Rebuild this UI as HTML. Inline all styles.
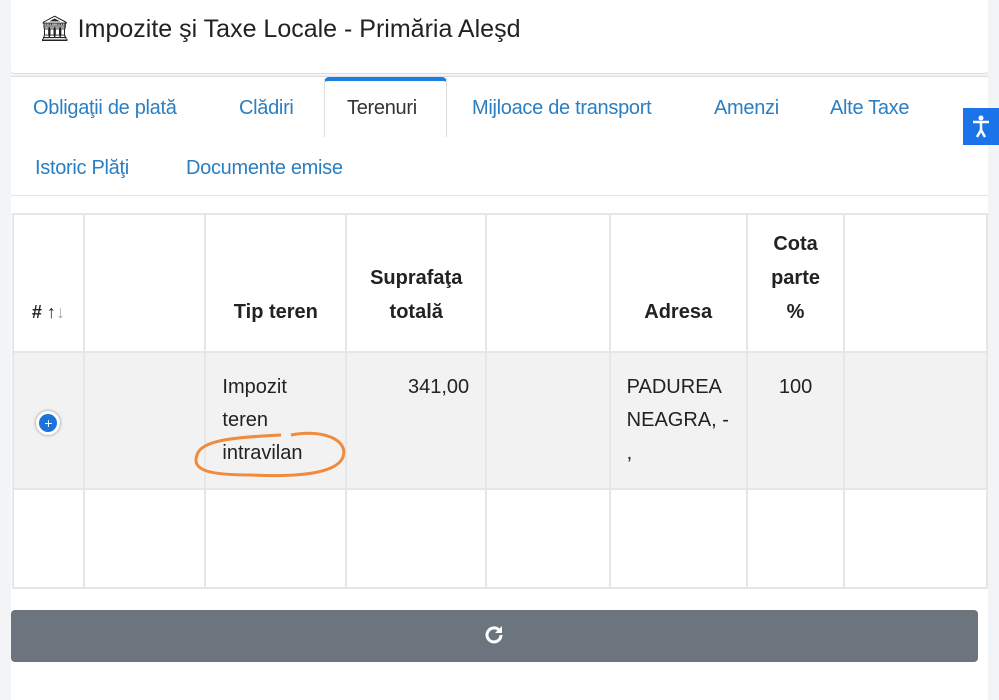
<!DOCTYPE html>
<html><head><meta charset="utf-8"><style>
*{box-sizing:border-box;margin:0;padding:0}
body{width:999px;height:700px;background:#f3f4f6;font-family:"Liberation Sans",sans-serif;position:relative;overflow:hidden}
.card{position:absolute;left:11px;width:977px;background:#fff}
.h{top:0;height:74px;border-bottom:1px solid #ddd;border-radius:0 0 4px 4px}
.h span{position:absolute;left:28px;top:15px;font-size:25px;color:#222}
.b{top:76px;height:624px;border-top:1px solid #ddd}
.tab{position:absolute;font-size:20px;color:#2a7ec2;letter-spacing:-0.3px}
.act{position:absolute;left:313px;top:0;width:123px;height:60px;border:1px solid #ddd;border-top:4px solid #1a7fe0;border-bottom:none;border-radius:5px 5px 0 0;background:#fff}
table{position:absolute;left:1px;top:136px;border-collapse:collapse}
td,th{border:2px solid #e4e6e8;font-size:20px;color:#222}
th{font-weight:bold;vertical-align:bottom;text-align:center;padding-bottom:22px;line-height:34px}
.btn{position:absolute;left:0;top:533px;width:967px;height:52px;background:#6c757d;border-radius:4px}
.acc{position:absolute;left:963px;top:108px;width:36px;height:37px;background:#1a73e8}
</style></head><body>
<div class="card h"><span>🏛 Impozite şi Taxe Locale - Primăria Aleşd</span></div>
<div class="card b">
<div class="act"></div>
<div class="tab" style="left:22px;top:20px">Obligaţii de plată</div>
<div class="tab" style="left:228px;top:20px">Clădiri</div>
<div class="tab" style="left:336px;top:20px;color:#333">Terenuri</div>
<div class="tab" style="left:461px;top:20px">Mijloace de transport</div>
<div class="tab" style="left:703px;top:20px">Amenzi</div>
<div class="tab" style="left:819px;top:20px">Alte Taxe</div>
<div class="tab" style="left:24px;top:80px">Istoric Plăţi</div>
<div class="tab" style="left:175px;top:80px">Documente emise</div>
<div style="position:absolute;left:0;top:118px;width:977px;border-top:1px solid #e4e4e4"></div>
<table>
<tr style="height:138px"><th style="width:71px;font-size:18px">#&nbsp;↑<span style="color:#aaa">↓</span></th><th style="width:122px"></th><th style="width:141px">Tip teren</th><th style="width:140px">Suprafaţa<br>totală</th><th style="width:124px"></th><th style="width:137px">Adresa</th><th style="width:98px">Cota<br>parte<br>%</th><th style="width:143px"></th></tr>
<tr style="height:136px;background:#f2f2f2;vertical-align:top;line-height:33px">
<td style="vertical-align:middle;text-align:center"><span style="display:inline-block;width:24px;height:24px;border-radius:50%;background:#1a73d8;border:3px solid #fff;box-shadow:0 0 3px #888;color:#fff;font-size:14px;line-height:18px;margin-top:8px">+</span></td>
<td></td><td style="padding:18px 16px">Impozit<br>teren<br>intravilan</td><td style="text-align:right;padding:18px 16px">341,00</td><td></td><td style="padding:18px 16px">PADUREA<br>NEAGRA, -<br>,</td><td style="text-align:center;padding-top:18px">100</td><td></td></tr>
<tr style="height:99px"><td></td><td></td><td></td><td></td><td></td><td></td><td></td><td></td></tr>
</table>
<svg style="position:absolute;left:180px;top:352px" width="160" height="56"><path d="M100 6 C130 0 158 10 152 28 C145 46 100 48 60 46 C20 46 0 42 6 26 C10 10 50 8 90 6" fill="none" stroke="#f08a3c" stroke-width="3"/></svg>
<div class="btn"><svg style="position:absolute;left:472px;top:14px" width="22" height="22" viewBox="0 0 22 22"><path d="M18 11a7 7 0 1 1-2-5" fill="none" stroke="#fff" stroke-width="3"/><path d="M19 2v7h-7z" fill="#fff"/></svg></div>
</div>
<div class="acc"><svg width="36" height="37" viewBox="0 0 36 37"><circle cx="18" cy="10" r="2.5" fill="#fff"/><path d="M10 14h16M18 14v8M18 22l-4 7M18 22l4 7" stroke="#fff" stroke-width="2.5" fill="none"/></svg></div>
</body></html>
